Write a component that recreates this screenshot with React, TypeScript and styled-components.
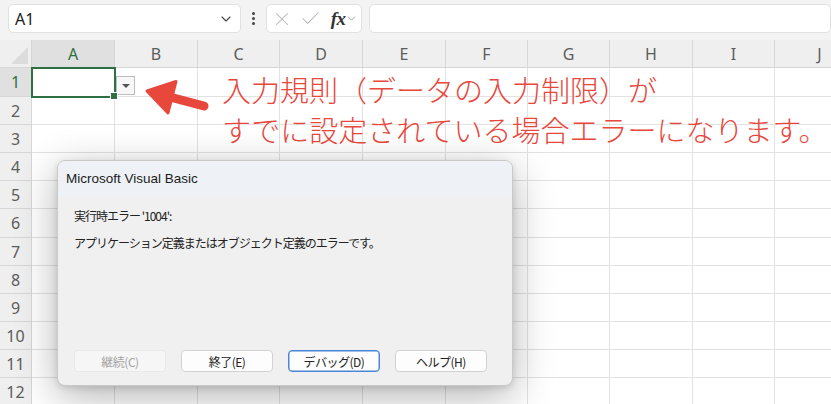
import React from 'react';
import styled, { createGlobalStyle } from 'styled-components';
import { ChevronDown, X, Check } from 'lucide-react';

const colors = {
    toolbar: '#f3f3f3',
    header: '#efefef',
    headerActive: '#e0e0e0',
    grid: '#e2e2e2',
    headerLine: '#d6d6d6',
    green: '#2e7044',
    red: '#e8473c',
    text: '#222222',
};

const COLUMNS = ['A', 'B', 'C', 'D', 'E', 'F', 'G', 'H', 'I', 'J'];
const COL_WIDTHS = [83, 83, 82, 83, 83, 82, 82, 83, 82, 90];
const ROW_HEIGHTS = [29, 28, 28, 28, 28, 29, 28, 28, 28, 28, 28, 28];

const GlobalStyle = createGlobalStyle`
    html, body {
        margin: 0;
        padding: 0;
        background: #ffffff;
        overflow: hidden;
    }
    * {
        box-sizing: border-box;
    }
`;

const Page = styled.div`
    position: relative;
    width: 831px;
    height: 404px;
    overflow: hidden;
    background: #ffffff;
    font-family: 'Noto Sans', 'Noto Sans CJK JP', sans-serif;
`;

/* ---------- formula bar ---------- */

const Toolbar = styled.div`
    display: flex;
    align-items: flex-start;
    height: 40px;
    padding: 4px 0 0 8px;
    background: ${colors.toolbar};
`;

const Box = styled.div`
    display: flex;
    align-items: center;
    height: 29px;
    background: #ffffff;
    border: 1px solid #e1e1e1;
    border-radius: 5px;
`;

const NameBox = styled(Box)`
    width: 237px;
    padding: 0 6px 0 6px;
    justify-content: space-between;
    font-size: 16px;
    color: ${colors.text};
`;

const Dots = styled.div`
    width: 25px;
    height: 29px;
    display: flex;
    flex-direction: column;
    align-items: center;
    justify-content: center;
    gap: 2px;

    span {
        width: 3px;
        height: 3px;
        border-radius: 50%;
        background: #444;
    }
`;

const FormulaButtons = styled(Box)`
    width: 98px;
    padding: 0 2px 0 4px;
    gap: 6px;
    color: #b4b4b4;
`;

const Fx = styled.span`
    font-family: 'Liberation Serif', serif;
    font-style: italic;
    font-weight: bold;
    font-size: 19px;
    color: #333;
    margin-left: 3px;
    letter-spacing: -0.5px;
`;

const FormulaInput = styled(Box)`
    margin-left: 7px;
    width: 470px;
`;

/* ---------- sheet ---------- */

const Sheet = styled.div`
    display: grid;
    grid-template-columns: 32px ${COL_WIDTHS.map((w) => `${w}px`).join(' ')};
    grid-template-rows: 28px ${ROW_HEIGHTS.map((h) => `${h}px`).join(' ')};
    width: max-content;
`;

const Corner = styled.div`
    position: relative;
    background: ${colors.header};
    border-right: 1px solid ${colors.headerLine};
    border-bottom: 1px solid ${colors.headerLine};

    &::after {
        content: '';
        position: absolute;
        right: 3px;
        bottom: 3px;
        border-left: 17px solid transparent;
        border-bottom: 17px solid #dcdcdc;
    }
`;

const ColHeader = styled.div<{ $active?: boolean }>`
    display: flex;
    align-items: center;
    justify-content: center;
    background: ${(p) => (p.$active ? colors.headerActive : colors.header)};
    border-right: 1px solid ${colors.headerLine};
    border-bottom: 1px solid ${colors.headerLine};
    color: ${(p) => (p.$active ? colors.green : '#5c5c5c')};
    font-size: 16px;
`;

const RowHeader = styled(ColHeader)`
    font-size: 16px;
`;

const Cell = styled.div`
    position: relative;
    border-right: 1px solid ${colors.grid};
    border-bottom: 1px solid ${colors.grid};
`;

const Selection = styled.div`
    position: absolute;
    inset: -1px -2px -2px -1px;
    border: 2px solid ${colors.green};
    z-index: 2;

    &::after {
        content: '';
        position: absolute;
        right: -4px;
        bottom: -4px;
        width: 6px;
        height: 6px;
        background: ${colors.green};
        border: 1px solid #ffffff;
    }
`;

const DropButton = styled.div`
    position: absolute;
    left: 116px;
    top: 76px;
    width: 19px;
    height: 19px;
    background: #f7f7f7;
    border: 1px solid #bdbdbd;
    display: flex;
    align-items: center;
    justify-content: center;

    &::after {
        content: '';
        border-left: 4px solid transparent;
        border-right: 4px solid transparent;
        border-top: 4px solid #555;
    }
`;

/* ---------- annotation ---------- */

const Arrow = styled.svg`
    position: absolute;
    left: 0;
    top: 0;
    pointer-events: none;
`;

const Note = styled.div`
    position: absolute;
    left: 222px;
    top: 69px;
    font-family: 'Noto Sans CJK JP', sans-serif;
    font-weight: 300;
    font-size: 29px;
    line-height: 40px;
    color: ${colors.red};
    white-space: nowrap;
    text-shadow: 0 0 2px #ffffff;
`;

/* ---------- dialog ---------- */

const Dialog = styled.div`
    position: absolute;
    left: 57px;
    top: 160px;
    width: 456px;
    height: 226px;
    display: flex;
    flex-direction: column;
    background: #f0f0f0;
    border: 1px solid #c9c9c9;
    border-radius: 8px;
    overflow: hidden;
    box-shadow: 0 10px 40px rgba(0, 0, 0, 0.3), 0 2px 6px rgba(0, 0, 0, 0.12);
    z-index: 5;
`;

const TitleBar = styled.div`
    height: 35px;
    display: flex;
    align-items: center;
    padding-left: 8px;
    background: #eef2f6;
    font-family: 'Liberation Sans', sans-serif;
    font-size: 13.5px;
    color: #1b1b1b;
`;

const Body = styled.div`
    flex: 1;
    display: flex;
    flex-direction: column;
    padding: 10px 16px 0 16px;
    font-family: 'Noto Sans CJK JP', sans-serif;
    font-size: 12px;
    color: ${colors.text};
`;

const Message = styled.p`
    margin: 0;
    height: 27px;
    line-height: 20px;
    letter-spacing: -1px;
`;

const Buttons = styled.div`
    margin-top: auto;
    display: flex;
    gap: 15px;
    padding-bottom: 13px;
`;

const DialogButton = styled.button<{ $focused?: boolean }>`
    width: 92px;
    height: 22px;
    padding: 0;
    font-family: 'Noto Sans CJK JP', sans-serif;
    font-size: 12px;
    letter-spacing: -0.5px;
    color: ${colors.text};
    background: #fdfdfd;
    border: 1px solid ${(p) => (p.$focused ? '#4a86d6' : '#d2d2d2')};
    box-shadow: ${(p) => (p.$focused ? 'inset 0 0 0 0.5px #4a86d6' : 'none')};
    border-radius: 4px;

    &:disabled {
        color: #a3a3a3;
        background: #f6f6f6;
        border-color: #e9e9e9;
    }
`;

export default function App() {
    return (
        <Page>
            <GlobalStyle />
            <Toolbar>
                <NameBox>
                    <span>A1</span>
                    <ChevronDown size={16} strokeWidth={1.6} color="#444" />
                </NameBox>
                <Dots>
                    <span />
                    <span />
                    <span />
                </Dots>
                <FormulaButtons>
                    <X size={22} strokeWidth={1.1} />
                    <Check size={23} strokeWidth={1.1} />
                    <Fx>fx</Fx>
                    <ChevronDown size={13} strokeWidth={1.4} color="#888" style={{ marginLeft: -7 }} />
                </FormulaButtons>
                <FormulaInput />
            </Toolbar>

            <Sheet>
                <Corner />
                {COLUMNS.map((c) => (
                    <ColHeader key={c} $active={c === 'A'}>
                        {c}
                    </ColHeader>
                ))}
                {ROW_HEIGHTS.map((_, r) => (
                    <React.Fragment key={r}>
                        <RowHeader $active={r === 0}>{r + 1}</RowHeader>
                        {COLUMNS.map((c) => (
                            <Cell key={c}>{r === 0 && c === 'A' && <Selection />}</Cell>
                        ))}
                    </React.Fragment>
                ))}
            </Sheet>

            <DropButton />

            <Arrow width="831" height="404" viewBox="0 0 831 404">
                <line
                    x1="204"
                    y1="106"
                    x2="166"
                    y2="96"
                    stroke={colors.red}
                    strokeWidth="9"
                    strokeLinecap="round"
                />
                <polygon
                    points="147,91 176,81.5 168,113"
                    fill={colors.red}
                    stroke={colors.red}
                    strokeWidth="3"
                    strokeLinejoin="round"
                />
            </Arrow>

            <Note>
                入力規則（データの入力制限）が
                <br />
                すでに設定されている場合エラーになります。
            </Note>

            <Dialog>
                <TitleBar>Microsoft Visual Basic</TitleBar>
                <Body>
                    <Message>実行時エラー '1004':</Message>
                    <Message>アプリケーション定義またはオブジェクト定義のエラーです。</Message>
                    <Buttons>
                        <DialogButton disabled>継続(C)</DialogButton>
                        <DialogButton>終了(E)</DialogButton>
                        <DialogButton $focused>デバッグ(D)</DialogButton>
                        <DialogButton>ヘルプ(H)</DialogButton>
                    </Buttons>
                </Body>
            </Dialog>
        </Page>
    );
}
